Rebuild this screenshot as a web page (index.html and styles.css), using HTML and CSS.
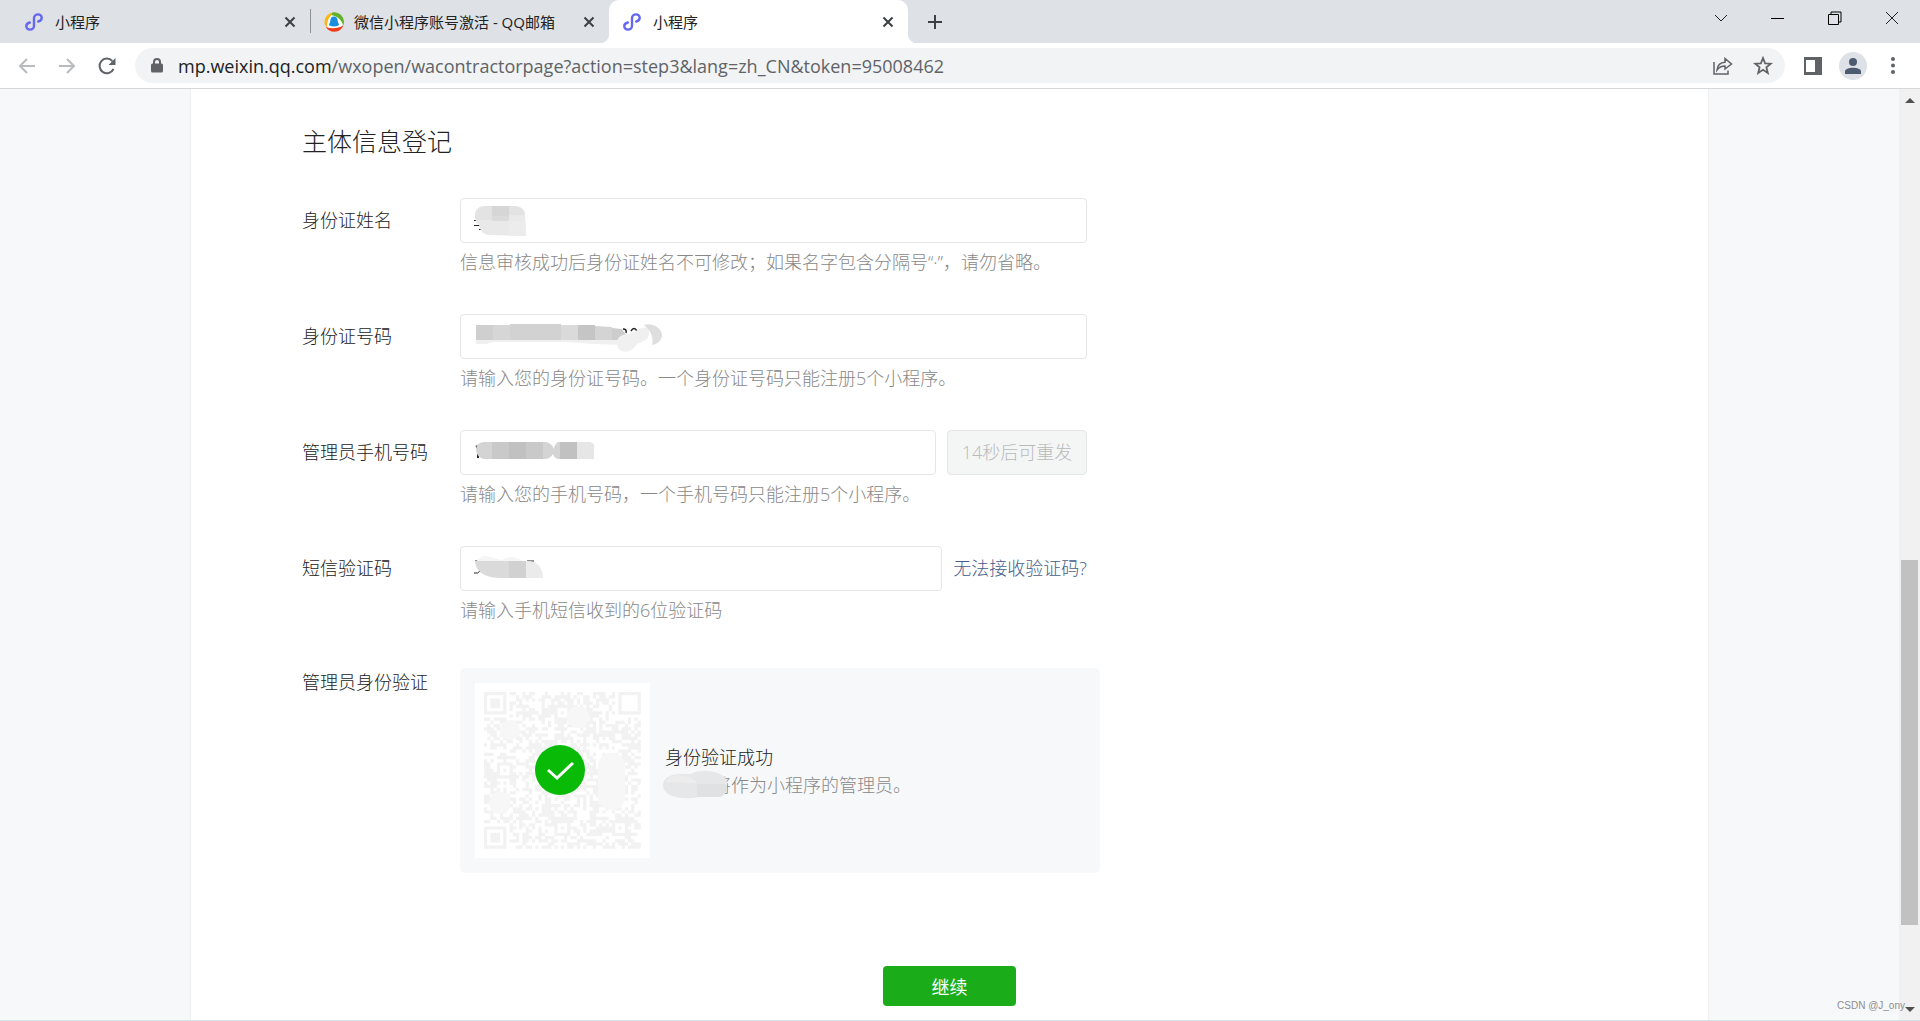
FILE: index.html
```html
<!DOCTYPE html>
<html lang="zh-CN">
<head>
<meta charset="utf-8">
<meta name="viewport" content="width=device-width, initial-scale=1">
<title>小程序</title>
<link rel="stylesheet" href="styles.css">
</head>
<body>
<svg class="defs" aria-hidden="true">
  <symbol id="mini" viewBox="0 0 18 18"><path d="M13.200 8.500c2.200-.5 3.500-1.900 3.500-3.700 0-2-1.600-3.400-3.700-3.400S9 3 9 5.200v7.600c0 2.200-1.800 3.800-4 3.800s-3.700-1.400-3.700-3.400c0-1.800 1.300-3.200 3.500-3.700" fill="none" stroke="#6467ef" stroke-width="2.400" stroke-linecap="round"/></symbol>
  <symbol id="x" viewBox="0 0 12 12"><path d="M1.500 1.500l9 9M10.500 1.500l-9 9" stroke="#3c4043" stroke-width="2"/></symbol>
</svg>
<div class="browser">
  <header class="tabstrip">
    <div class="tab">
      <svg class="tab-icon"><use href="#mini"/></svg>
      <span class="tab-title">小程序</span>
      <button class="tab-close" aria-label="关闭标签页"><svg width="12" height="12"><use href="#x"/></svg></button>
    </div>
    <div class="tab tab-divided">
      <svg class="tab-icon tab-icon-mail" viewBox="0 0 20 20">
        <circle cx="10" cy="10" r="9" fill="#fff"/>
        <path d="M8.500.5C3 1.500-.5 7 .8 12.500l2.500 3.500C2.500 9 5 4 10.500 1z" fill="#fbb612"/>
        <path d="M8.500.5C14-.5 19.500 3.500 20 9.500c0 1.500-.3 2.700-.8 4C17.500 8 14 4.500 7.500 3z" fill="#62b32b"/>
        <path d="M1.700 15c3.500 6 12 6.500 16.300 1 .6-.9 1-1.700 1.200-2.500-5 3-11.500 3.500-17.500 1.500z" fill="#ef3d1a"/>
        <path d="M10 4.500c-2.500 0-3.700 2-3.700 4.500 0 1.500-1.300 2.500-1.300 4.300 1.300.2 1.800 1.200 5 1.200s3.700-1 5-1.200c0-1.800-1.300-2.800-1.300-4.300 0-2.500-1.200-4.500-3.700-4.500z" fill="#1b8fdc"/>
      </svg>
      <span class="tab-title">微信小程序账号激活 - QQ邮箱</span>
      <button class="tab-close" aria-label="关闭标签页"><svg width="12" height="12"><use href="#x"/></svg></button>
    </div>
    <div class="tab tab-active">
      <svg class="tab-icon"><use href="#mini"/></svg>
      <span class="tab-title">小程序</span>
      <button class="tab-close" aria-label="关闭标签页"><svg width="12" height="12"><use href="#x"/></svg></button>
    </div>
    <button class="new-tab" aria-label="新标签页"><svg width="16" height="16"><path d="M8 1v14M1 8h14" stroke="#3c4043" stroke-width="2"/></svg></button>
    <div class="window-controls">
      <button aria-label="搜索标签页"><svg width="14" height="14"><path d="M1 4l6 6 6-6" fill="none" stroke="#222"/></svg></button>
      <button aria-label="最小化"><svg width="14" height="14"><path d="M0 7.500h13" stroke="#000"/></svg></button>
      <button aria-label="还原"><svg width="14" height="14"><path d="M.5 3.500h10v10H.5zM3 3V1h10v10h-2" fill="none" stroke="#000"/></svg></button>
      <button aria-label="关闭"><svg width="14" height="14"><path d="M1 1l12 12M13 1L1 13" stroke="#222"/></svg></button>
    </div>
  </header>
  <nav class="toolbar">
    <button aria-label="后退"><svg width="18" height="18"><path d="M17 9H2M9 2L2 9l7 7" fill="none" stroke="#b9bbbe" stroke-width="2"/></svg></button>
    <button aria-label="前进"><svg width="18" height="18"><path d="M1 9h15M9 2l7 7-7 7" fill="none" stroke="#b9bbbe" stroke-width="2"/></svg></button>
    <button aria-label="重新加载"><svg width="18" height="18"><path d="M15.500 12A7.300 7.300 0 1 1 14.300 4" fill="none" stroke="#5f6368" stroke-width="2"/><path d="M17.500 1v7h-7z" fill="#5f6368"/></svg></button>
    <div class="omnibox">
      <svg class="lock" width="12" height="15"><path d="M3 6V4a3 3 0 0 1 6 0v2" fill="none" stroke="#5f6368" stroke-width="2"/><rect x="0" y="5.500" width="12" height="9" rx="1.500" fill="#5f6368"/></svg>
      <span class="url"><span class="host">mp.weixin.qq.com</span>/wxopen/wacontractorpage?action=step3&amp;lang=zh_CN&amp;token=95008462</span>
      <button aria-label="分享"><svg width="20" height="18"><path d="M1 5v12h14v-3.500M4 13c.5-5 3.500-7.500 8-7.700V1.500L18.500 7 12 12V9c-3.500 0-6 1.200-8 4z" fill="none" stroke="#5f6368" stroke-width="1.500"/></svg></button>
      <button aria-label="加入书签"><svg width="20" height="19"><path d="M10 2l2.100 5.300 5.700.4-4.400 3.600 1.400 5.600-4.800-3.100-4.800 3.100 1.400-5.600L2.200 7.700l5.700-.4z" fill="none" stroke="#5f6368" stroke-width="1.800"/></svg></button>
    </div>
    <button class="side-panel" aria-label="侧边栏"><svg width="18" height="18"><path fill-rule="evenodd" d="M0 0h18v18H0zM2 3v12h9V3z" fill="#5f6368"/></svg></button>
    <button class="profile" aria-label="个人资料"><svg width="16" height="16"><circle cx="8" cy="4" r="4" fill="#4d5b70"/><path d="M0 16v-2.500C0 11 4 9.800 8 9.800s8 1.200 8 3.700V16z" fill="#4d5b70"/></svg></button>
    <button aria-label="菜单"><svg width="4" height="17"><g fill="#5f6368"><circle cx="2" cy="2" r="2"/><circle cx="2" cy="8.500" r="2"/><circle cx="2" cy="15" r="2"/></g></svg></button>
  </nav>
  <div class="viewport">
    <main class="page">
      <form class="panel">
        <div class="panel-body">
          <h1>主体信息登记</h1>
          <div class="row">
            <label for="name">身份证姓名</label>
            <div class="field">
              <div class="control">
                <input id="name" type="text">
                <svg class="mosaic" width="60" height="32" aria-hidden="true"><path d="M0 15.500h3M0 20.500h6M5 24.500h3" stroke="#222"/><clipPath id="c1"><path d="M1 10C1 4 6 1 12 1h28c7 0 11 4 11 9l1 21-37-1C8 29 6 25 5 20 2 18 1 14 1 10z"/></clipPath><g clip-path="url(#c1)"><path fill="#e9e9e9" d="M0 0h60v32H0z"/><path fill="#e3e3e3" d="M0 0h18v15H5l-5 5z"/><path fill="#d6d6d6" d="M18 0h17v11H18z"/><path fill="#dbdbdb" d="M18 11h17v5H18z"/><path fill="#e2e2e2" d="M35 0h17v10H35z"/><path fill="#ececec" d="M35 16h17v16H35z"/></g></svg>
              </div>
              <p class="hint">信息审核成功后身份证姓名不可修改；如果名字包含分隔号“·”，请勿省略。</p>
            </div>
          </div>
          <div class="row">
            <label for="idno">身份证号码</label>
            <div class="field">
              <div class="control">
                <input id="idno" type="text">
                <svg class="mosaic" width="190" height="32" aria-hidden="true"><path d="M149 8q4 0 3 4M157 10q3-5 6 0" fill="none" stroke="#222" stroke-width="1.500"/><path fill="#f0f0f0" d="M2 18h148v6l-30-1-28-2H20l-8 2H2z"/><path fill="#cfcfcf" d="M2 4h17v15H2z"/><path fill="#d6d6d6" d="M19 4h17v15H19z"/><path fill="#d2d2d2" d="M36 3h51v16H36z"/><path fill="#dadada" d="M87 4h17v15H87z"/><path fill="#c5c5c5" d="M104 4h17v15h-17z"/><path fill="#d4d4d4" d="M121 5l17 1v13h-17z"/><path fill="#cdcdcd" d="M138 7l10 1 4 6-6 5h-8z"/><path fill="#f0f0f0" d="M143 22c0-6 5-9 12-9l13-6c8-3 9 7 4 12l-9 4c-6 10-19 11-20-1z"/><path fill="#dedede" d="M170 4c9-3 18 4 18 10 0 5-4 9-10 10 2-7-1-14-8-20z"/></svg>
              </div>
              <p class="hint">请输入您的身份证号码。一个身份证号码只能注册5个小程序。</p>
            </div>
          </div>
          <div class="row">
            <label for="phone">管理员手机号码</label>
            <div class="field">
              <div class="control">
                <input id="phone" type="tel">
                <svg class="mosaic" width="124" height="32" aria-hidden="true"><path d="M2 10l2-1M4 11v10M83 18q3 5 7 0M94 18q3 5 7 0M104 21h2" fill="none" stroke="#222" stroke-width="2"/><clipPath id="c3"><path d="M10 5h61q6 0 9 7 0-4 4-7h29q7 0 7 5v12H84q-4-1-5-5-3 5-8 5H10Q2 20 2 12q0-6 8-7z"/></clipPath><g clip-path="url(#c3)"><path fill="#d4d4d4" d="M0 0h124v32H0z"/><path fill="#c9c9c9" d="M18 0h17v32H18zM52 0h17v32H52z"/><path fill="#c1c1c1" d="M35 0h17v32H35zM86 0h17v32H86z"/><path fill="#e6e6e6" d="M103 0h21v32h-21z"/></g></svg>
              </div>
              <button class="resend" type="button" disabled>14秒后可重发</button>
              <p class="hint">请输入您的手机号码，一个手机号码只能注册5个小程序。</p>
            </div>
          </div>
          <div class="row">
            <label for="code">短信验证码</label>
            <div class="field">
              <div class="control">
                <input id="code" type="text">
                <svg class="mosaic" width="76" height="32" aria-hidden="true"><path d="M1 8h5M0 20q4 1 6-2M33 8h3M53 8h7" fill="none" stroke="#222"/><path fill="#f5f5f5" d="M2 9q6-9 14-5l12 3q10-7 22 2z"/><clipPath id="c4"><path d="M1 8h52c12 0 16 8 16 17H28C12 25 2 20 1 8z"/></clipPath><g clip-path="url(#c4)"><path fill="#dadada" d="M0 0h35v32H0z"/><path fill="#d1d1d1" d="M35 0h17v32H35z"/><path fill="#ebebeb" d="M52 0h20v32H52z"/></g></svg>
              </div>
              <a href="#">无法接收验证码?</a>
              <p class="hint">请输入手机短信收到的6位验证码</p>
            </div>
          </div>
          <div class="row row-verify">
            <span class="row-name">管理员身份验证</span>
            <div class="verify">
              <svg class="qr" viewBox="0 0 175 175" role="img" aria-label="二维码，已验证">
                <path fill="#fff" d="M0 0h175v175H0z"/>
                <g transform="translate(9 9) scale(3.200)"><path id="modules" fill="#f2f2f2"/></g>
                <g fill="#f7f7f7"><circle cx="35" cy="47" r="10"/><circle cx="103" cy="34" r="11"/><circle cx="25" cy="120" r="11"/><rect x="123" y="70" width="27" height="57" rx="13"/></g>
                <circle cx="85" cy="87" r="25" fill="#09bb07"/>
                <path d="M73 87l9 8 16-15" fill="none" stroke="#fff" stroke-width="3"/>
              </svg>
              <div class="verify-text">
                <p class="verify-title">身份验证成功</p>
                <p class="verify-note"><svg width="64" height="30" aria-hidden="true"><path fill="#e6e7e9" d="M0 15C0 8 8 4 16 4h12c10-6 30-3 35 5 3 7 0 15-6 18H36c-10 3-36 2-36-12z"/><path fill="#ededee" d="M3 12c4-10 23-8 32 1z"/><path fill="#e0e1e3" d="M34 14h29c2 7-1 11-6 13H34z"/></svg>将作为小程序的管理员。</p>
              </div>
            </div>
          </div>
        </div>
        <button class="submit" type="button">继续</button>
      </form>
    </main>
    <div class="scrollbar" aria-hidden="true">
      <svg width="10" height="5"><path d="M0 5l5-5 5 5z" fill="#505050"/></svg>
      <div class="track"><span class="before"></span><span class="thumb"></span><span class="after"></span></div>
      <svg width="10" height="5"><path d="M0 0l5 5 5-5z" fill="#505050"/></svg>
    </div>
    <span class="watermark">CSDN @J_ony</span>
  </div>
</div>
<script src="qr.js"></script>
</body>
</html>
```
FILE: styles.css
```css
* { box-sizing: border-box; }
body {
  margin: 0;
  font-family: "Open Sans", "Noto Sans CJK SC", sans-serif;
  font-size: 18px;
  color: #222;
}
button {
  display: flex;
  align-items: center;
  justify-content: center;
  padding: 0;
  border: 0;
  background: none;
  font: inherit;
}
h1, p { margin: 0; font-weight: 300; }
.defs { position: absolute; width: 0; height: 0; }
.browser {
  display: flex;
  flex-direction: column;
  height: 100vh;
  border-bottom: 1px solid #cfe8ee;
}

/* tab strip */
.tabstrip {
  display: flex;
  flex: none;
  height: 43px;
  padding-left: 11px;
  background: #dee1e6;
}
.tab {
  display: flex;
  align-items: center;
  flex: 0 1 299px;
  min-width: 0;
  padding: 0 14px;
  font-size: 15px;
}
.tab-divided {
  background: linear-gradient(#8e9196, #8e9196) 0 9px / 1px 24px no-repeat;
}
.tab-active {
  position: relative;
  border-radius: 10px 10px 0 0;
  background: #fff;
}
.tab-active::before, .tab-active::after {
  content: "";
  position: absolute;
  bottom: 0;
  width: 10px;
  height: 10px;
}
.tab-active::before {
  right: 100%;
  background: radial-gradient(circle at 0 0, #dee1e6 10px, #fff 11px);
}
.tab-active::after {
  left: 100%;
  background: radial-gradient(circle at 100% 0, #dee1e6 10px, #fff 11px);
}
.tab-icon { flex: none; width: 18px; height: 18px; margin-right: 12px; }
.tab-icon-mail { width: 20px; height: 20px; margin-right: 10px; }
.tab-title { flex: 1; overflow: hidden; white-space: nowrap; }
.tab-close { width: 12px; height: 12px; }
.new-tab { width: 54px; }
.window-controls { display: flex; margin-left: auto; height: 36px; }
.window-controls button { width: 57px; }

/* toolbar */
.toolbar {
  display: flex;
  align-items: center;
  flex: none;
  height: 46px;
  padding: 0 7px;
  border-bottom: 1px solid #d5d7da;
  background: #fff;
}
.toolbar button { flex: none; width: 40px; height: 36px; }
.omnibox {
  display: flex;
  align-items: center;
  flex: 1;
  min-width: 0;
  height: 35px;
  margin: 0 8px;
  padding: 0 2px 0 16px;
  border-radius: 18px;
  background: #f1f3f4;
}
.lock { flex: none; }
.url {
  flex: 1;
  margin-left: 15px;
  overflow: hidden;
  white-space: nowrap;
  color: #5f6368;
}
.host { color: #202124; }
.toolbar .profile { width: 28px; height: 28px; margin: 0 6px; border-radius: 50%; background: #dee1e6; }

/* page */
.viewport { position: relative; display: flex; flex: 1; min-height: 0; }
.page { flex: 1; min-width: 0; overflow: hidden; background: #f7f8fa; }
.panel {
  width: 80%;
  min-height: 100%;
  margin: 0 auto;
  padding-top: 32px;
  border: solid #eceef0;
  border-width: 0 1px;
  background: #fff;
}
.panel-body { padding-left: 111px; }
h1 {
  margin-bottom: 37px;
  font-size: 25px;
  line-height: 40px;
}
.row {
  display: grid;
  grid-template-columns: 158px minmax(0, 627px);
  margin-bottom: 40px;
  font-weight: 300;
}
.row label { line-height: 44px; }
.field { display: flex; flex-wrap: wrap; align-items: center; column-gap: 11px; }
.control { position: relative; flex: 1; }
.control input {
  display: block;
  width: 100%;
  height: 45px;
  padding: 0 14px;
  border: 1px solid #e4e6e8;
  border-radius: 4px;
  background: #fff;
  font: inherit;
}
.mosaic { position: absolute; top: 7px; left: 14px; }
.hint {
  width: 100%;
  margin-top: 7px;
  line-height: 24px;
  color: #888;
}
.resend {
  width: 140px;
  height: 45px;
  padding-bottom: 4px;
  border: 1px solid #e4e6e8;
  border-radius: 4px;
  background: #f4f6f6;
  font-weight: 300;
  color: #b8baba;
}
.field a { padding-bottom: 4px; color: #465d8c; text-decoration: none; }
.row-verify {
  grid-template-columns: 158px minmax(0, 640px);
  margin: 46px 0 93px;
}
.row-name { line-height: 28px; }
.verify {
  display: flex;
  align-items: center;
  gap: 15px;
  padding: 15px;
  border-radius: 5px;
  background: #f7f8fa;
}
.qr { flex: none; width: 175px; height: 175px; }
.verify-text { line-height: 28px; }
.verify-note { display: flex; align-items: center; height: 28px; color: #888; }
.verify-note svg { flex: none; margin-right: -14px; margin-left: -2px; z-index: 1; }
.submit {
  width: 133px;
  height: 40px;
  margin: 0 auto;
  border-radius: 4px;
  background: #1aad19;
  color: #fff;
}

/* scrollbar */
.scrollbar {
  display: flex;
  flex-direction: column;
  align-items: center;
  flex: none;
  width: 21px;
  padding: 9px 0 8px;
  background: #f1f1f1;
}
.track { display: flex; flex-direction: column; flex: 1; width: 17px; }
.before { flex: 457; }
.thumb { flex: 365; background: #c1c1c1; }
.after { flex: 82; }
.watermark {
  position: absolute;
  right: 15px;
  bottom: 6px;
  font: 10px/16px "Liberation Sans", sans-serif;
  color: #8c8e90;
}
```
FILE: qr.js
```js
// Fills the verification code with a 49 x 49 grid of modules.
(function () {
  var size = 49, seed = 20477, path = "";
  var finders = [[0, 0, true], [42, 0, false], [0, 42, true]];
  var marks = [[22, 4], [4, 22], [22, 40], [40, 40]];
  function random() {
    seed = (seed * 16807) % 2147483647;
    return seed / 2147483647;
  }
  function filled(x, y) {
    var i, dx, dy, ring;
    for (i = 0; i < finders.length; i++) {
      dx = x - finders[i][0];
      dy = y - finders[i][1];
      if (dx >= -1 && dx <= 7 && dy >= -1 && dy <= 7) {
        ring = Math.max(Math.abs(dx - 3), Math.abs(dy - 3));
        return ring === 3 || (ring < 2 && finders[i][2]);
      }
    }
    for (i = 0; i < marks.length; i++) {
      ring = Math.max(Math.abs(x - marks[i][0] - 2), Math.abs(y - marks[i][1] - 2));
      if (ring < 3) return ring !== 1;
    }
    return random() < 0.52;
  }
  for (var y = 0; y < size; y++) {
    for (var x = 0; x < size; x++) {
      if (filled(x, y)) path += "M" + x + " " + y + "h1v1h-1z";
    }
  }
  document.getElementById("modules").setAttribute("d", path);
})();
```
